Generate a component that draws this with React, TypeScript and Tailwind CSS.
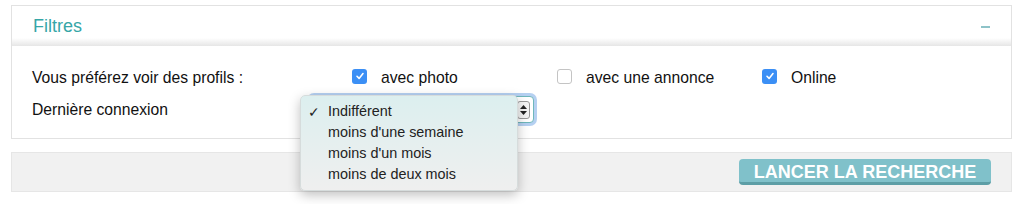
import React from 'react';

function Check({ checked }: { checked: boolean }) {
  if (checked) {
    return (
      <span className="flex h-[15px] w-[15px] items-center justify-center rounded-[3px] bg-[#3b8ff5]">
        <svg width="10" height="10" viewBox="0 0 10 10">
          <path d="M2 5.3 L4.1 7.4 L8 2.6" fill="none" stroke="white" strokeWidth="1.6" strokeLinecap="round" strokeLinejoin="round" />
        </svg>
      </span>
    );
  }
  return <span className="h-[15px] w-[15px] rounded-[3px] border border-[#c4c4c4] bg-white" />;
}

function Option({ checked, label }: { checked: boolean; label: string }) {
  return (
    <label className="flex w-[205px] items-center">
      <Check checked={checked} />
      <span className="ml-[14px] mt-[3px]">{label}</span>
    </label>
  );
}

const choices = ['Indifférent', "moins d'une semaine", "moins d'un mois", 'moins de deux mois'];

export default function App() {
  return (
    <div className="h-[204px] w-[1024px] bg-white pl-[11px] pr-[12px] pt-[5px] text-[15.7px] leading-none text-[#111] [font-family:'Liberation_Sans',Arial,sans-serif]">
      <div className="border border-[#e2e2e2]">
        <div className="flex h-[40px] items-center justify-between bg-linear-to-b from-white from-80% to-[#e6e6e6] pl-[21px] pr-[21px]">
          <span className="text-[18px] leading-none text-[#36a6a7]">Filtres</span>
          <span className="mt-[2px] h-[2px] w-[9px] bg-[#8ec3c8]" />
        </div>
        <div className="flex flex-col gap-[12px] pl-[20px] pb-[15px] pt-[22px]">
          <div className="flex h-[16px] items-center">
            <span className="mt-[3px] w-[320px]">Vous préférez voir des profils :</span>
            <Option checked label="avec photo" />
            <Option checked={false} label="avec une annonce" />
            <Option checked label="Online" />
          </div>
          <div className="flex h-[27px] items-center">
            <span className="w-[278px]">Dernière connexion</span>
            <div className="relative">
              <div className="flex h-[27px] w-[224px] items-center justify-end rounded-[4px] border border-[#6fb7bb] bg-white pr-[3px] shadow-[0_0_0_3px_rgba(120,170,230,0.55)]">
                <span className="flex h-[18px] w-[13px] flex-col items-center justify-center gap-[2px] rounded-[3px] border border-[#999] bg-[#f4f4f4]">
                  <svg width="7" height="4" viewBox="0 0 7 4"><path d="M0 4 L3.5 0 L7 4Z" fill="#222" /></svg>
                  <svg width="7" height="4" viewBox="0 0 7 4"><path d="M0 0 L3.5 4 L7 0Z" fill="#222" /></svg>
                </span>
              </div>
              <div className="absolute left-[-10px] top-[-1px] z-10 w-[218px] rounded-[5px] border border-[#d6dcdc] bg-linear-to-b from-[#dcefef] to-[#efefef] py-[5px] text-[14.4px] text-[#222] shadow-[0_4px_12px_rgba(0,0,0,0.25)]">
                {choices.map((c, i) => (
                  <div key={c} className="flex h-[21px] items-center">
                    <span className="w-[27px] pl-[7px] text-[14px]">{i === 0 ? '✓' : ''}</span>
                    <span>{c}</span>
                  </div>
                ))}
              </div>
            </div>
          </div>
        </div>
      </div>
      <div className="mt-[13px] flex h-[40px] items-center justify-end border border-[#e6e6e6] bg-[#f1f1f1] pr-[20px]">
        <button className="h-[26px] w-[252px] rounded-[4px] border-b-[3px] border-[#5d9ea6] bg-[#80c1ca] pt-[2px] text-[18px] font-bold leading-none text-white">
          LANCER LA RECHERCHE
        </button>
      </div>
    </div>
  );
}
